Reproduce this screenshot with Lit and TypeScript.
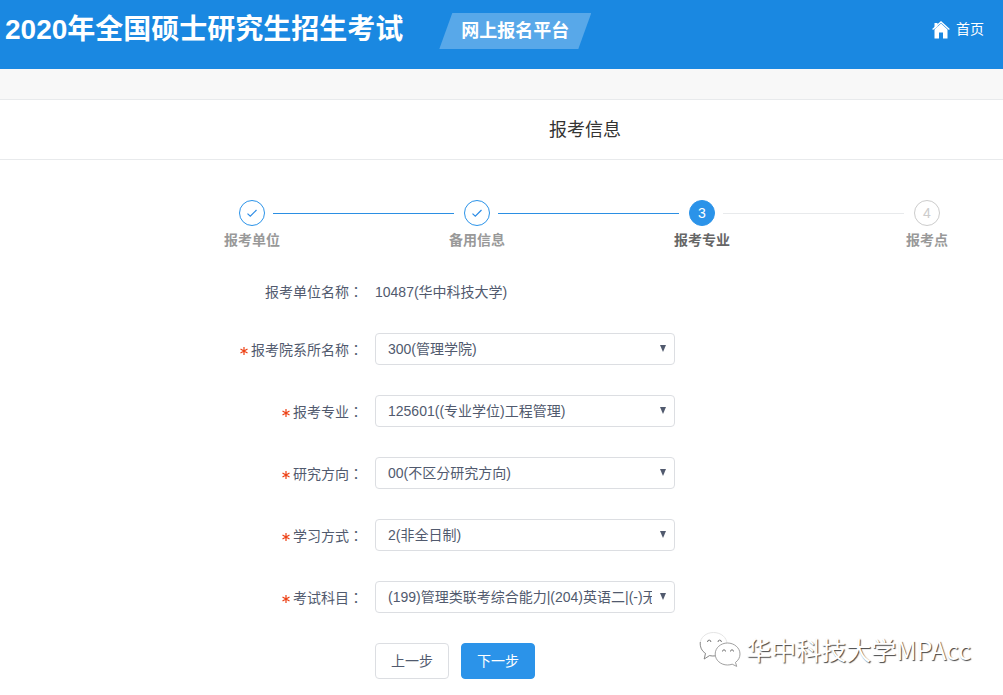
import { LitElement, html, svg, css, nothing } from "lit";
import { customElement, property } from "lit/decorators.js";
import { classMap } from "lit/directives/class-map.js";

type StepState = "done" | "current" | "wait";

interface Step {
  label: string;
  state: StepState;
}

interface Field {
  id: string;
  label: string;
  value: string;
}

const STEPS: Step[] = [
  { label: "报考单位", state: "done" },
  { label: "备用信息", state: "done" },
  { label: "报考专业", state: "current" },
  { label: "报考点", state: "wait" },
];

const FIELDS: Field[] = [
  { id: "department", label: "报考院系所名称", value: "300(管理学院)" },
  { id: "major", label: "报考专业", value: "125601((专业学位)工程管理)" },
  { id: "direction", label: "研究方向", value: "00(不区分研究方向)" },
  { id: "mode", label: "学习方式", value: "2(非全日制)" },
  { id: "subjects", label: "考试科目", value: "(199)管理类联考综合能力|(204)英语二|(-)无" },
];

@customElement("site-header")
class SiteHeader extends LitElement {
  static styles = css`
    :host {
      display: block;
      background: #1a88e1;
      color: #fff;
    }
    .bar {
      display: flex;
      align-items: flex-start;
      height: 69px;
      padding: 0 19px 0 5px;
      box-sizing: border-box;
    }
    .title {
      margin: 10px 0 0;
      font-size: 28px;
      line-height: 40px;
      font-weight: 700;
      white-space: nowrap;
    }
    .badge {
      margin: 13px 0 0 36px;
      padding: 0 22px;
      font-size: 18px;
      line-height: 36px;
      font-weight: 700;
      white-space: nowrap;
      background: #58a8e9;
      clip-path: polygon(13px 0, 100% 0, calc(100% - 13px) 100%, 0 100%);
    }
    .home {
      display: flex;
      align-items: center;
      gap: 6px;
      margin: 19px 0 0 auto;
      font-size: 14px;
      line-height: 20px;
      color: #fff;
      text-decoration: none;
      white-space: nowrap;
    }
    .home svg {
      width: 18px;
      height: 18px;
      margin-top: 2px;
    }
  `;

  render() {
    return html`
      <header class="bar">
        <h1 class="title">2020年全国硕士研究生招生考试</h1>
        <span class="badge">网上报名平台</span>
        <a class="home" href="#">
          <svg viewBox="0 0 18 18" aria-hidden="true">
            <path fill="#fff" d="M2.500 8.500 9 2.600l6.500 5.900v9h-4.500v-6H7v6H2.500z" />
            <path fill="#fff" d="M2.500 2h3v3.500l-3 2.700z" />
            <path fill="none" stroke="#fff" stroke-width="1.300" d="M.6 8.600 9 .9l8.400 7.700" />
          </svg>
          <span>首页</span>
        </a>
      </header>
    `;
  }
}

@customElement("step-bar")
class StepBar extends LitElement {
  @property({ attribute: false }) steps: Step[] = [];

  static styles = css`
    :host {
      display: block;
    }
    .steps {
      display: flex;
      margin: 0;
      padding: 0;
      list-style: none;
    }
    .step {
      flex: 1;
      display: flex;
      color: #999;
    }
    .step:last-child {
      flex: none;
    }
    .node {
      display: flex;
      flex-direction: column;
      align-items: center;
      gap: 4px;
      width: 56px;
    }
    .circle {
      display: flex;
      align-items: center;
      justify-content: center;
      width: 26px;
      height: 26px;
      box-sizing: border-box;
      border: 1px solid #ccc;
      border-radius: 50%;
      font-size: 14px;
      color: #ccc;
    }
    .circle svg {
      width: 12px;
      height: 12px;
    }
    .label {
      font-size: 14px;
      line-height: 20px;
      font-weight: 700;
      white-space: nowrap;
    }
    .line {
      flex: 1;
      height: 1px;
      margin: 13px -5px 0 -7px;
      background: #e8eaec;
    }
    .done .circle {
      border-color: #2b93e9;
    }
    .passed {
      background: #2b8fe3;
    }
    .current .circle {
      border-color: #2b93e9;
      background: #2b93e9;
      color: #fff;
    }
    .current .label {
      color: #666;
    }
  `;

  render() {
    return html`
      <ol class="steps">
        ${this.steps.map((step, i) => {
          const done = step.state === "done";
          return html`
            <li class=${classMap({ step: true, done, current: step.state === "current" })}>
              <div class="node">
                <span class="circle">
                  ${done
                    ? html`<svg viewBox="0 0 12 12" role="img" aria-label="已完成">
                        ${svg`<path fill="none" stroke="#2b8be6" stroke-width="1.200" d="M1.500 6.600 4.300 9.200 10.500 3" />`}
                      </svg>`
                    : i + 1}
                </span>
                <span class="label">${step.label}</span>
              </div>
              ${i < this.steps.length - 1
                ? html`<span class=${classMap({ line: true, passed: done })}></span>`
                : nothing}
            </li>
          `;
        })}
      </ol>
    `;
  }
}

@customElement("apply-form")
class ApplyForm extends LitElement {
  @property({ attribute: false }) fields: Field[] = [];

  static styles = css`
    :host {
      display: block;
      font-size: 14px;
      color: #515a6e;
    }
    .form {
      display: flex;
      flex-direction: column;
      gap: 30px;
    }
    .row {
      display: grid;
      grid-template-columns: 363px minmax(0, 300px);
      column-gap: 12px;
      align-items: center;
      line-height: 22px;
    }
    .name {
      text-align: right;
      white-space: nowrap;
    }
    .colon {
      font-family: "Noto Sans CJK TC", sans-serif;
    }
    .required {
      display: inline-block;
      width: 8px;
      height: 8px;
      margin-right: 3px;
    }
    .picker {
      position: relative;
      display: flex;
    }
    .select {
      width: 100%;
      height: 32px;
      padding: 0 22px 0 12px;
      box-sizing: border-box;
      border: 1px solid #dcdee2;
      border-radius: 4px;
      background: #fff;
      appearance: none;
      font: inherit;
      color: inherit;
    }
    .arrow {
      position: absolute;
      top: 12px;
      right: 9px;
      width: 6px;
      height: 7px;
      pointer-events: none;
    }
    .actions {
      grid-column: 2;
      display: flex;
      gap: 12px;
    }
    .button {
      height: 36px;
      padding: 0 15px;
      border: 1px solid #dcdee2;
      border-radius: 4px;
      background: #fff;
      font: inherit;
      color: inherit;
      white-space: nowrap;
    }
    .primary {
      border-color: #2b93e9;
      background: #2b93e9;
      color: #fff;
    }
  `;

  render() {
    return html`
      <form class="form" @submit=${(e: Event) => e.preventDefault()}>
        <div class="row">
          <span class="name">报考单位名称<span class="colon">：</span></span>
          <span>10487(华中科技大学)</span>
        </div>
        ${this.fields.map(
          (f) => html`
            <div class="row">
              <label class="name" for=${f.id}
                ><svg class="required" viewBox="0 0 8 8" aria-hidden="true">
                  <path fill="none" stroke="#ed4014" stroke-width="1.200" d="M4 0v8M.5 2l7 4M.5 6l7-4" /></svg
                >${f.label}<span class="colon">：</span></label
              >
              <div class="picker">
                <select class="select" id=${f.id} required>
                  <option>${f.value}</option>
                </select>
                <svg class="arrow" viewBox="0 0 6 7" aria-hidden="true">
                  <path fill="#515a6e" d="M0 0h6L3 7z" />
                </svg>
              </div>
            </div>
          `,
        )}
        <div class="row">
          <div class="actions">
            <button class="button" type="button">上一步</button>
            <button class="button primary" type="submit">下一步</button>
          </div>
        </div>
      </form>
    `;
  }
}

@customElement("account-mark")
class AccountMark extends LitElement {
  static styles = css`
    :host {
      display: flex;
      align-items: center;
      gap: 5px;
      font-family: "Noto Sans CJK SC", sans-serif;
      font-size: 25px;
      line-height: 36px;
      color: #fff;
      white-space: nowrap;
      pointer-events: none;
    }
    .logo {
      width: 42px;
      height: 36px;
    }
    .text {
      text-shadow: 1px 1px 1px #444;
    }
  `;

  render() {
    return html`
      <svg class="logo" viewBox="0 0 42 36" aria-hidden="true">
        <g fill="#fff" stroke-width="0.800">
          <path stroke="#ddd"
            d="M14.500 1.500C7 1.500 1.200 6.400 1.200 13c0 4 2 7.300 5.300 9.400L5.200 28l5.300-3.400c1.500.3 3 .5 4.500.4C22 24.500 28 19.500 28 13 28 6.500 22 1.500 14.500 1.500z" />
          <path fill="none" stroke="#777"
            d="M1.300 11c-.5 5 1.500 9 5.200 11.400L5.200 28l5.300-3.400c1.900.4 3.900.5 5.800.3" />
          <path stroke="#888"
            d="M28.500 12C21.800 12 16.200 16.800 16.200 23S21.800 34 28.500 34c1.700 0 3.200-.3 4.700-.8l4.500 2.200-1.200-4c2.800-2 4.500-5 4.500-8.400C41 16.800 35.200 12 28.500 12z" />
        </g>
        <path fill="none" stroke="#777" d="M8.500 11a1.700 1.900 0 0 1 3.400 0M19 11a1.700 1.900 0 0 1 3.400 0M23.500 20.500a1.500 1.700 0 0 1 3 0M31.500 20.500a1.500 1.700 0 0 1 3 0" />
      </svg>
      <span class="text">华中科技大学MPAcc</span>
    `;
  }
}

@customElement("app-root")
class AppRoot extends LitElement {
  static styles = css`
    :host {
      display: block;
      position: relative;
      min-height: 100vh;
      box-sizing: border-box;
      padding-bottom: 16px;
      background: #fff;
      font-family: "Liberation Sans", "Noto Sans CJK SC", sans-serif;
    }
    .band {
      height: 30px;
      background: #f8f8f8;
      border-bottom: 1px solid #e8eaec;
    }
    .heading {
      margin: 0;
      padding: 1px 0 0 167px;
      border-bottom: 1px solid #e8eaec;
      font-size: 18px;
      line-height: 58px;
      font-weight: 400;
      text-align: center;
      color: #333;
    }
    .progress {
      margin: 40px 48px 30px 224px;
    }
    .mark {
      position: absolute;
      right: 32px;
      bottom: 28px;
    }
  `;

  render() {
    return html`
      <site-header></site-header>
      <div class="band"></div>
      <main>
        <h2 class="heading">报考信息</h2>
        <step-bar class="progress" .steps=${STEPS}></step-bar>
        <apply-form .fields=${FIELDS}></apply-form>
      </main>
      <account-mark class="mark"></account-mark>
    `;
  }
}
